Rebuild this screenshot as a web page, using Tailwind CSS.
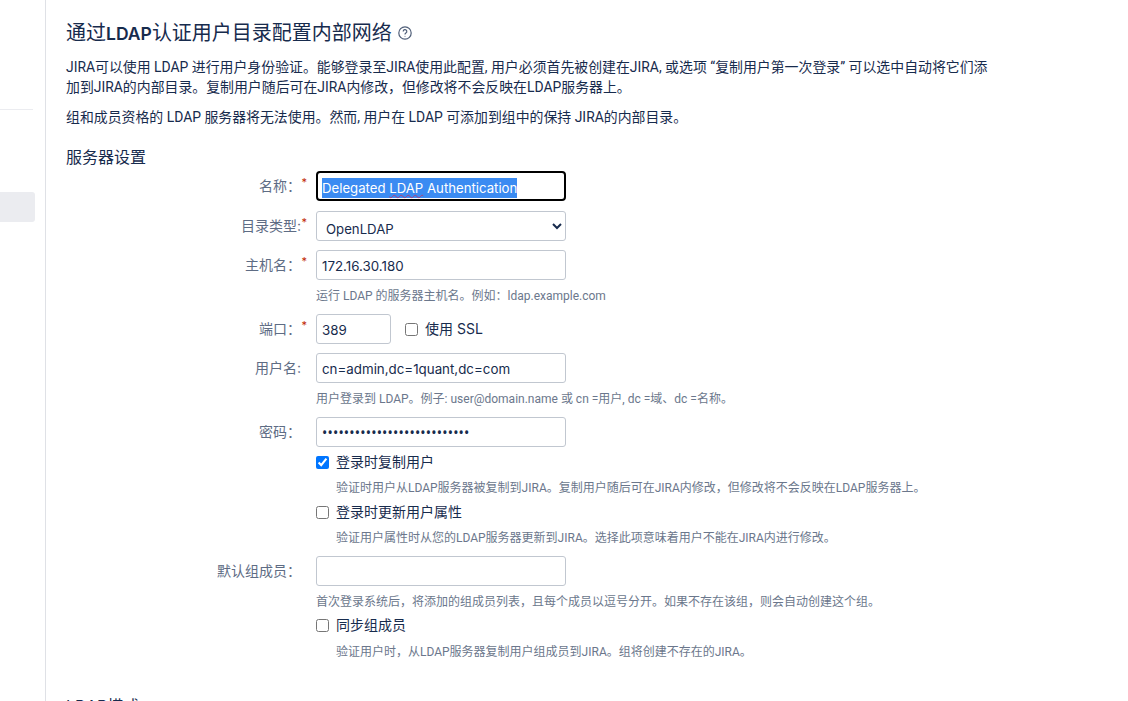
<!DOCTYPE html>
<html lang="zh-CN">
<head>
  <meta charset="UTF-8" />
  <title>通过LDAP认证用户目录配置内部网络</title>
  <script src="https://cdn.jsdelivr.net/npm/@tailwindcss/browser@4"></script>
</head>
<body class="h-[701px] overflow-hidden bg-white text-[14px] leading-[20px] text-[#172b4d] font-['Inter','Noto_Sans_CJK_SC',sans-serif]">
  <div class="flex h-[701px]">

    <!-- 侧边栏 -->
    <aside class="w-[46px] shrink-0 border-r border-[#dfe1e6] pt-[109px]">
      <div class="h-px w-[33px] bg-[#ebecf0]"></div>
      <div class="mt-[82px] h-[30px] w-[35px] rounded-r-[3px] bg-[#ebecf0]"></div>
    </aside>

    <!-- 主体 -->
    <main class="flex-1 pl-[20px] pt-[19px]">
      <h1 class="flex h-[28px] items-center text-[20px] leading-[28px]">
        <span>通过<span class="text-[17.5px] font-semibold">LDAP</span>认证用户目录配置内部网络</span>
        <svg class="ml-[5px]" width="16" height="16" viewBox="0 0 16 16" fill="none" stroke="#505f79" stroke-width="1.2">
          <circle cx="8" cy="8" r="6.2" />
          <path d="M6.2 6.5a1.8 1.8 0 1 1 2.7 1.5c-.6.4-.9.7-.9 1.4" />
          <circle cx="8" cy="11.2" r=".5" fill="#505f79" stroke="none" />
        </svg>
      </h1>
      <p class="mt-[10px] w-[925px] text-[13.9px] leading-[20px] font-['Roboto','Noto_Sans_CJK_SC',sans-serif]">JIRA可以使用 LDAP 进行用户身份验证。能够登录至JIRA使用此配置, 用户必须首先被创建在JIRA, 或选项 “复制用户第一次登录” 可以选中自动将它们添加到JIRA的内部目录。复制用户随后可在JIRA内修改，但修改将不会反映在LDAP服务器上。</p>
      <p class="mt-[10px] text-[13.9px] leading-[20px] font-['Roboto','Noto_Sans_CJK_SC',sans-serif]">组和成员资格的 LDAP 服务器将无法使用。然而, 用户在 LDAP 可添加到组中的保持 JIRA的内部目录。</p>

      <h2 class="mt-[20px] text-[16px] leading-[20px]">服务器设置</h2>

      <form class="mt-[4px] flex flex-col">
        <div class="flex h-[30px] items-center">
          <label class="relative w-[250px] pr-[15px] text-right text-[#5e6c84]">名称：<span class="absolute right-[9px] top-[-4px] text-[11px] text-[#bf2600]">*</span></label>
          <div class="flex h-[30px] w-[250px] items-center rounded-[4px] border-2 border-black pl-[4px] pt-[3px] text-[13.2px]">
            <span class="bg-[#3b8bf2] text-white">Delegated <span class="underline decoration-wavy decoration-[#b0407a] decoration-1">LDAP</span> Authentication</span>
          </div>
        </div>

        <div class="mt-[10px] flex h-[30px] items-center">
          <label class="relative w-[250px] pr-[15px] text-right text-[#5e6c84]">目录类型:<span class="absolute right-[9px] top-[-4px] text-[11px] text-[#bf2600]">*</span></label>
          <select class="h-[30px] w-[250px] rounded-[3px] border border-[#c1c7d0] bg-white pl-[5px] pt-[6px] text-[13.2px]">
            <option>OpenLDAP</option>
          </select>
        </div>

        <div class="mt-[9px] flex h-[30px] items-center">
          <label class="relative w-[250px] pr-[15px] text-right text-[#5e6c84]">主机名：<span class="absolute right-[9px] top-[-4px] text-[11px] text-[#bf2600]">*</span></label>
          <input type="text" value="172.16.30.180" class="h-[30px] w-[250px] rounded-[3px] border border-[#c1c7d0] pl-[5px] pt-[1px] text-[13.33px]" />
        </div>
        <p class="ml-[250px] mt-[7px] h-[18px] text-[12px] leading-[18px] text-[#6b778c] font-['Roboto','Noto_Sans_CJK_SC',sans-serif]">运行 LDAP 的服务器主机名。例如：ldap.example.com</p>

        <div class="mt-[9px] flex h-[30px] items-center">
          <label class="relative w-[250px] pr-[15px] text-right text-[#5e6c84]">端口：<span class="absolute right-[9px] top-[-4px] text-[11px] text-[#bf2600]">*</span></label>
          <input type="text" value="389" class="h-[30px] w-[75px] rounded-[3px] border border-[#c1c7d0] pl-[5px] pt-[1px] text-[13.33px]" />
          <input type="checkbox" class="ml-[14px] h-[13px] w-[13px]" />
          <span class="ml-[7px]">使用 SSL</span>
        </div>

        <div class="mt-[9px] flex h-[30px] items-center">
          <label class="w-[250px] pr-[15px] text-right text-[#5e6c84]">用户名:</label>
          <input type="text" value="cn=admin,dc=1quant,dc=com" class="h-[30px] w-[250px] rounded-[3px] border border-[#c1c7d0] pl-[5px] pt-[1px] text-[13.33px]" />
        </div>
        <p class="ml-[250px] mt-[7px] h-[18px] text-[12px] leading-[18px] text-[#6b778c] font-['Roboto','Noto_Sans_CJK_SC',sans-serif]">用户登录到 LDAP。例子: user@domain.name 或 cn =用户, dc =域、dc =名称。</p>

        <div class="mt-[9px] flex h-[30px] items-center">
          <label class="w-[250px] pr-[15px] text-right text-[#5e6c84]">密码：</label>
          <input type="password" value="123456789012345678901234567" class="h-[30px] w-[250px] rounded-[3px] border border-[#c1c7d0] pl-[5px] pt-[1px] text-[14px] tracking-[0.2px] font-['Noto_Sans',sans-serif]" />
        </div>

        <label class="ml-[250px] mt-[5px] flex h-[20px] items-center">
          <input type="checkbox" checked class="h-[13px] w-[13px]" />
          <span class="ml-[7px]">登录时复制用户</span>
        </label>
        <p class="ml-[270px] mt-[7px] h-[18px] text-[12px] leading-[18px] text-[#6b778c] font-['Roboto','Noto_Sans_CJK_SC',sans-serif]">验证时用户从LDAP服务器被复制到JIRA。复制用户随后可在JIRA内修改，但修改将不会反映在LDAP服务器上。</p>

        <label class="ml-[250px] mt-[5px] flex h-[20px] items-center">
          <input type="checkbox" class="h-[13px] w-[13px]" />
          <span class="ml-[7px]">登录时更新用户属性</span>
        </label>
        <p class="ml-[270px] mt-[7px] h-[18px] text-[12px] leading-[18px] text-[#6b778c] font-['Roboto','Noto_Sans_CJK_SC',sans-serif]">验证用户属性时从您的LDAP服务器更新到JIRA。选择此项意味着用户不能在JIRA内进行修改。</p>

        <div class="mt-[9px] flex h-[30px] items-center">
          <label class="w-[250px] pr-[15px] text-right text-[#5e6c84]">默认组成员：</label>
          <input type="text" class="h-[30px] w-[250px] rounded-[3px] border border-[#c1c7d0]" />
        </div>
        <p class="ml-[250px] mt-[7px] h-[18px] text-[12px] leading-[18px] text-[#6b778c] font-['Roboto','Noto_Sans_CJK_SC',sans-serif]">首次登录系统后，将添加的组成员列表，且每个成员以逗号分开。如果不存在该组，则会自动创建这个组。</p>

        <label class="ml-[250px] mt-[4px] flex h-[20px] items-center">
          <input type="checkbox" class="h-[13px] w-[13px]" />
          <span class="ml-[7px]">同步组成员</span>
        </label>
        <p class="ml-[270px] mt-[8px] h-[18px] text-[12px] leading-[18px] text-[#6b778c] font-['Roboto','Noto_Sans_CJK_SC',sans-serif]">验证用户时，从LDAP服务器复制用户组成员到JIRA。组将创建不存在的JIRA。</p>
      </form>

      <h2 class="mt-[35px] text-[16px] leading-[20px]">LDAP模式</h2>
    </main>
  </div>
</body>
</html>
